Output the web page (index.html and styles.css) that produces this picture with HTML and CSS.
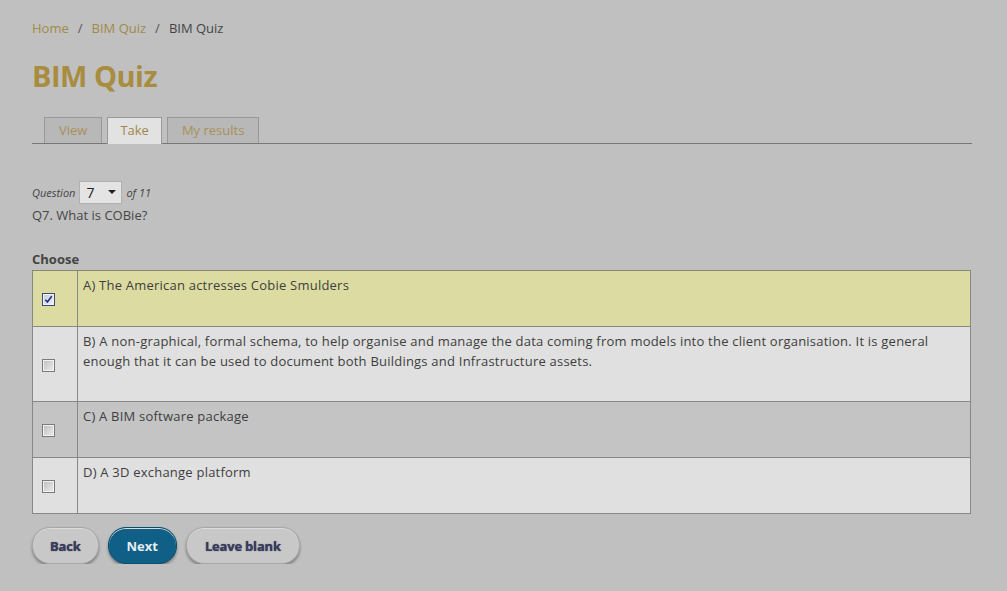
FILE: index.html
```html
<!DOCTYPE html>
<html>
<head>
<meta charset="utf-8">
<link rel="stylesheet" href="styles.css">
</head>
<body>
<div class="page">
  <nav class="breadcrumb"><a href="#">Home</a><span class="sep">/</span><a href="#">BIM Quiz</a><span class="sep">/</span><span class="current">BIM Quiz</span></nav>
  <h1 class="title">BIM Quiz</h1>
  <div class="tabs">
    <a class="tab" href="#">View</a>
    <a class="tab active" href="#">Take</a>
    <a class="tab" href="#">My results</a>
  </div>
  <div class="qnav">
    <span class="qlabel">Question</span>
    <span class="select"><span>7</span><span class="caret"></span></span>
    <span class="qlabel">of 11</span>
  </div>
  <div class="qtext">Q7. What is COBie?</div>
  <div class="choose">Choose</div>
  <div class="answers">
    <div class="row selected">
      <div class="cell-check"><span class="cb checked"><svg viewBox="0 0 10 10" width="9" height="9"><path d="M1.5 5.2 L3.8 7.8 L8.6 1.5" fill="none" stroke="#1f2f8a" stroke-width="1.8"/></svg></span></div>
      <div class="cell-text">A) The American actresses Cobie Smulders</div>
    </div>
    <div class="row light tall">
      <div class="cell-check"><span class="cb"></span></div>
      <div class="cell-text">B) A non-graphical, formal schema, to help organise and manage the data coming from models into the client organisation. It is general enough that it can be used to document both Buildings and Infrastructure assets.</div>
    </div>
    <div class="row dark">
      <div class="cell-check"><span class="cb"></span></div>
      <div class="cell-text">C) A BIM software package</div>
    </div>
    <div class="row light">
      <div class="cell-check"><span class="cb"></span></div>
      <div class="cell-text">D) A 3D exchange platform</div>
    </div>
  </div>
  <div class="buttons">
    <button class="btn">Back</button>
    <button class="btn primary">Next</button>
    <button class="btn wide">Leave blank</button>
  </div>
</div>
</body>
</html>
```
FILE: styles.css
```css
html, body {
  margin: 0;
  padding: 0;
  background: #c0c0c0;
}
body {
  font-family: "Open Sans", "DejaVu Sans", sans-serif;
  font-size: 13px;
  color: #464646;
}
.page {
  padding: 18px 35px 0 32px;
}
.breadcrumb {
  height: 20px;
  line-height: 20px;
  font-size: 13px;
}
.breadcrumb a {
  color: #a08a48;
  text-decoration: none;
}
.breadcrumb .sep {
  color: #555;
  margin: 0 9px;
}
.breadcrumb .current {
  color: #444;
}
.title {
  margin: 19px 0 0 0;
  font-size: 29px;
  line-height: 38px;
  font-weight: 700;
  color: #a88c40;
  letter-spacing: -0.5px;
}
.tabs {
  margin-top: 22px;
  display: flex;
  gap: 5px;
  padding-left: 12px;
  border-bottom: 1px solid #777;
  height: 26px;
}
.tab {
  display: block;
  height: 25px;
  line-height: 25px;
  padding: 0 14px;
  background: #b8b8b8;
  border: 1px solid #999;
  border-bottom: none;
  color: #a89058;
  text-decoration: none;
  font-size: 13px;
}
.tab.active {
  background: #e2e2e2;
  color: #a08848;
  height: 26px;
  margin-bottom: -1px;
  padding: 0 12px;
}
.qnav {
  margin-top: 36px;
  display: flex;
  align-items: center;
  gap: 4px;
  height: 24px;
}
.qlabel {
  font-style: italic;
  font-size: 11px;
  color: #444;
}
.select {
  display: flex;
  align-items: center;
  justify-content: space-between;
  width: 43px;
  height: 23px;
  box-sizing: border-box;
  padding: 0 5px 0 6px;
  background: #e4e4e4;
  border: 1px solid #b0b0b0;
  font-size: 14px;
  color: #222;
}
.caret {
  width: 0;
  height: 0;
  border-left: 4px solid transparent;
  border-right: 4px solid transparent;
  border-top: 4px solid #222;
}
.qtext {
  margin-top: 0px;
  line-height: 22px;
}
.choose {
  margin-top: 22px;
  font-weight: 700;
  line-height: 22px;
  color: #444;
}
.answers {
  border: 1px solid #888;
  border-top: none;
  margin-right: 1px;
}
.row {
  display: flex;
  height: 56px;
  border-top: 1px solid #888;
  box-sizing: border-box;
}
.row.tall {
  height: 75px;
}
.row.selected { background: #dcdca2; border-top-color: #8a8a6a; }
.row.light { background: #e0e0e0; }
.row.dark { background: #c4c4c4; }
.cell-check {
  width: 45px;
  flex: none;
  border-right: 1px solid #888;
  display: flex;
  align-items: center;
  justify-content: flex-start;
  padding: 2px 0 0 9px;
  box-sizing: border-box;
}
.cb {
  width: 11px;
  height: 11px;
  border: 1px solid #7a7a7a;
  background: linear-gradient(135deg, #bdbdbd, #ededed);
  box-shadow: inset 0 0 0 1px #f2f2f2;
  display: flex;
  align-items: center;
  justify-content: center;
}
.cb.checked {
  border-color: #3a4a7a;
  background: linear-gradient(135deg, #c8c8d8, #f2f2f8);
}
.cell-text {
  padding: 4px 40px 0 5px;
  line-height: 20px;
  color: #3e3e3e;
  letter-spacing: 0.22px;
}
.buttons {
  display: flex;
  gap: 9px;
  margin-top: 13px;
}
.btn {
  height: 37px;
  border-radius: 18px;
  border: 1px solid #a8a8a8;
  background: #c8c8c8;
  box-shadow: 0 2px 3px rgba(0,0,0,0.35), inset 0 1px 0 #dcdcdc;
  font-family: "Open Sans", "DejaVu Sans", sans-serif;
  font-size: 13px;
  font-weight: 700;
  color: #3a3c5c;
  text-shadow: 0 0 1px #3a3c5c;
  padding: 0 17px;
  letter-spacing: -0.2px;
}
.btn.primary {
  background: #0f5f86;
  border-color: #0a4f72;
  color: #e6eef2;
  text-shadow: none;
  padding: 0 18px;
  letter-spacing: 0;
}
.btn.wide { padding: 0 18px; }
```
